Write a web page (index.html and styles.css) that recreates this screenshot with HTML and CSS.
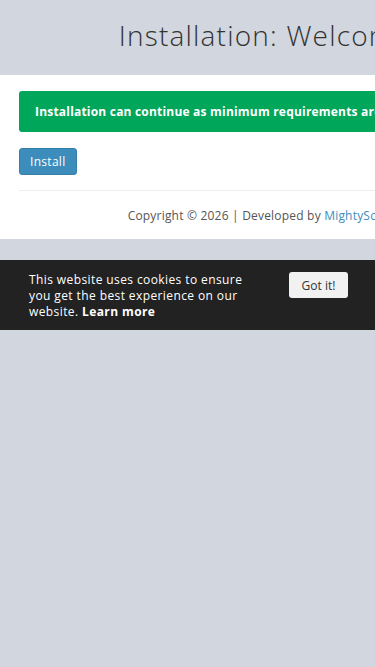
FILE: index.html
```
<!DOCTYPE html>
<html lang="en">
<head>
    <meta charset="UTF-8">
    <meta name="viewport" content="width=device-width, initial-scale=1.0">
    <title>Installation</title>
    <link rel="stylesheet" href="styles.css">
</head>
<body>
    <div class="page">
        <header class="page-header">
            <h1>Installation: Welcome</h1>
        </header>

        <div class="panel">
            <div class="alert-success">
                Installation can continue as minimum requirements are met
            </div>

            <button type="button" class="btn-install">Install</button>

            <hr class="divider">

            <footer class="copyright">
                Copyright &copy; 2026 | Developed by <a href="#">MightyScripts</a>
            </footer>
        </div>

        <div class="cookie-bar">
            <p class="cookie-text">
                This website uses cookies to ensure you get the best experience on our website. <a href="#">Learn more</a>
            </p>
            <button type="button" class="cookie-btn">Got it!</button>
        </div>
    </div>
</body>
</html>
```

FILE: styles.css
```
html, body {
    margin: 0;
    padding: 0;
    background-color: #d2d6de;
}
body {
    font-family: "Open Sans", "Noto Sans", sans-serif;
    font-size: 12px;
    color: #333;
}
.page {
    width: 530px;
}
.page-header {
    height: 75px;
    text-align: center;
}
.page-header h1 {
    margin: 0;
    padding-top: 17px;
    font-size: 28px;
    font-weight: 300;
    line-height: 36px;
    color: #333;
    letter-spacing: 1.2px;
}
.panel {
    background-color: #fff;
    padding: 16px 19px 1px;
}
.alert-success {
    background-color: #00a65a;
    color: #fff;
    font-weight: bold;
    letter-spacing: 0.2px;
    border-radius: 3px;
    padding: 12px 16px;
    line-height: 17px;
    white-space: nowrap;
}
.btn-install {
    display: block;
    margin-top: 16px;
    background-color: #3c8dbc;
    border: 1px solid #367fa9;
    border-radius: 3px;
    color: #fff;
    font-family: inherit;
    font-size: 12px;
    letter-spacing: 0.3px;
    padding: 4px 10px;
    height: 27px;
    cursor: pointer;
}
.divider {
    border: 0;
    border-top: 1px solid #eee;
    margin: 15px 0 0;
}
.copyright {
    text-align: center;
    color: #555;
    padding: 16px 0 14px;
    line-height: 17px;
    letter-spacing: 0.2px;
}
.copyright a {
    color: #3c8dbc;
    text-decoration: none;
}
.cookie-bar {
    margin-top: 21px;
    background-color: #222;
    display: flex;
    align-items: flex-start;
    padding: 12px 0 10px 29px;
}
.cookie-text {
    width: 222px;
    margin: 0;
    color: #fff;
    line-height: 16px;
    letter-spacing: 0.4px;
}
.cookie-text a {
    color: #fff;
    font-weight: bold;
    text-decoration: none;
}
.cookie-btn {
    margin-left: 38px;
    background-color: #f1f1f1;
    border: 0;
    border-radius: 3px;
    color: #333;
    font-family: inherit;
    font-size: 12px;
    width: 59px;
    height: 26px;
    cursor: pointer;
}
```
